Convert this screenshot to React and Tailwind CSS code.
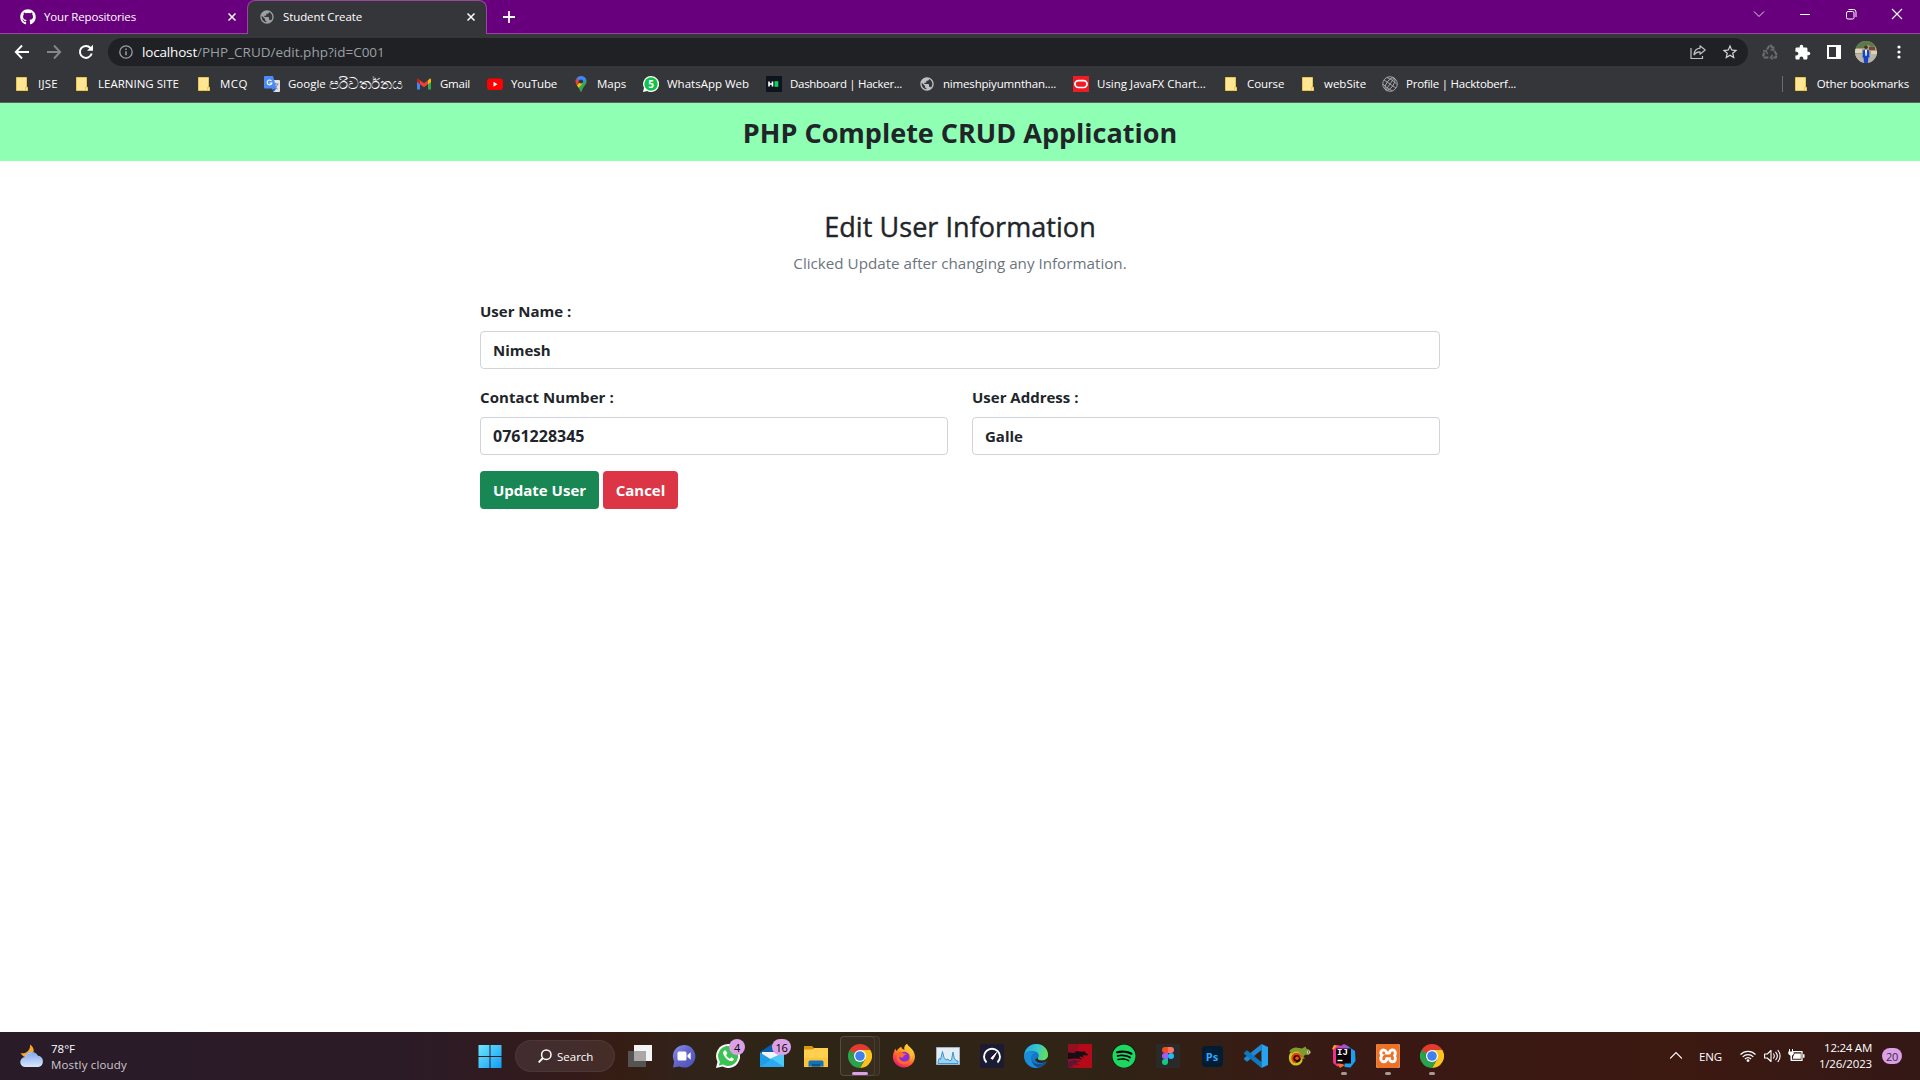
import React from "react";
import { FaGithub, FaSpotify } from "react-icons/fa6";
import { MdPublic, MdExtension, MdStarBorder } from "react-icons/md";
import { SiXampp } from "react-icons/si";

/* ---------- browser icons ---------- */

const CloseX = () => (
  <svg viewBox="0 0 8 8" className="h-2 w-2 shrink-0" stroke="#fff" strokeWidth="1.5">
    <path d="M.5.5l7 7M7.5.5l-7 7" />
  </svg>
);

const Folder = () => (
  <svg viewBox="0 0 16 16" className="h-4 w-4">
    <path d="M2.5 1.5h10v10.3l1 0v2.7h-11z" fill="#ffe694" stroke="#e9c54e" />
    <path d="M11.5 14.5v-3.2h2v3.2z" fill="#ffe694" stroke="#e9c54e" strokeWidth=".8" />
  </svg>
);

const Translate = () => (
  <svg viewBox="0 0 16 16" className="h-4 w-4">
    <path d="M6 4h9a1 1 0 011 1v10a1 1 0 01-1 1H9.5z" fill="#dfe1e5" />
    <path d="M8.5 8h6M11.500 7v1M13.500 8c-.5 2.500-2 4-3.500 5M10 9.500c.7 1.500 2 2.800 3.500 3.500" fill="none" stroke="#6f7f95" strokeWidth=".9" />
    <path d="M1 0h8l3.500 12.500H1a1 1 0 01-1-1V1a1 1 0 011-1z" fill="#4c8bf5" />
    <path d="M7.500 5A2.400 2.400 0 107.900 7H5.600" fill="none" stroke="#fff" strokeWidth="1.100" />
    <path d="M8.500 12.500H12.500L9.600 16z" fill="#2a56c6" />
  </svg>
);

const Gmail = () => (
  <svg viewBox="0 0 16 16" className="h-4 w-4">
    <path d="M1 4v9.500h3V7z" fill="#4285f4" />
    <path d="M15 4v9.500h-3V7z" fill="#34a853" />
    <path d="M12 4.200L14 2.600c.6 0 1 .6 1 1.400v2L12 8.200z" fill="#fbbc04" />
    <path d="M4 4.200L2 2.600C1.400 2.600 1 3.200 1 4v2l3 2.200z" fill="#c5221f" />
    <path d="M4 4.200l4 3 4-3v4l-4 3-4-3z" fill="#ea4335" />
  </svg>
);

const YouTube = () => (
  <svg viewBox="0 0 16 16" className="h-4 w-4">
    <rect x="0" y="2.500" width="16" height="11.500" rx="3" fill="#f00" />
    <path d="M6.500 5.800v4.900l4-2.450z" fill="#fff" />
  </svg>
);

const MapsPin = () => (
  <svg viewBox="0 0 16 16" className="h-4 w-4">
    <path d="M3.900 9.200L11.900 2C13 3 13.500 4.300 13.500 5.500c0 3.500-3.500 5-4.500 9-.3 1.700-1.700 1.700-2 0C6.400 12.300 5 10.800 3.900 9.200z" fill="#34a853" />
    <path d="M3.900 9.200C3 8 2.500 7 2.500 5.500c0-1.400.5-2.500 1.200-3.400L6 5.500z" fill="#ea4335" />
    <path d="M3.900 9.200L6.300 6.700 9.700 7.200 5.800 11.700z" fill="#fbbc04" />
    <path d="M3.700 2.100C4.700.8 6.200 0 8 0c3 0 5 2 5.400 4.300L9.700 7.200 6 5z" fill="#4285f4" />
    <circle cx="8" cy="5.500" r="2.100" fill="#35363a" />
  </svg>
);

const WhatsAppBadge = () => (
  <span className="relative flex h-4 w-4 items-center justify-center">
    <svg viewBox="0 0 16 16" className="absolute inset-0 h-4 w-4">
      <path d="M8 0a8 8 0 11-3.800 15L0 16l1-4.200A8 8 0 018 0z" fill="#fff" />
      <circle cx="8" cy="8" r="6.700" fill="#12c24a" />
    </svg>
    <span className="relative text-[10px] leading-none font-bold text-white">5</span>
  </span>
);

const HackerRank = () => (
  <svg viewBox="0 0 16 16" className="h-4 w-4">
    <path d="M0 0h16v16H0z" fill="#0e141e" />
    <path d="M3 5.500v5M6.500 5.500v5M3 8h3.500" stroke="#fff" strokeWidth="1.600" />
    <path d="M8.500 5.200h3.800v5.600H8.500z" fill="#05d75c" />
  </svg>
);

const Oracle = () => (
  <svg viewBox="0 0 16 16" className="h-4 w-4">
    <path d="M0 0h16v16H0z" fill="#ee1c24" />
    <rect x="2" y="4.700" width="12" height="6.800" rx="3.400" fill="none" stroke="#fff" strokeWidth="1.700" />
  </svg>
);

const Hacktoberfest = () => (
  <svg viewBox="0 0 16 16" className="h-4 w-4" fill="none" stroke="#a9abb0" strokeWidth=".9">
    <circle cx="8" cy="8" r="7.300" />
    <ellipse cx="8" cy="8" rx="3.300" ry="7.300" transform="rotate(35 8 8)" />
    <path d="M3.800 14L12.200 2M2 4l12 8M5 1.600C8 2.500 12 5 15 8.500M1 8c3 3.500 6 5.500 9.500 6.800" />
  </svg>
);

const Globe = () => <MdPublic className="h-4 w-4 shrink-0 text-[#bdc1c6]" />;

const bookmarks = [
  { icon: Folder, label: "IJSE", cls: "w-[60px] tracking-[0.25px]" },
  { icon: Folder, label: "LEARNING SITE", cls: "w-[122px]" },
  { icon: Folder, label: "MCQ", cls: "w-[68px] tracking-[0.4px]" },
  { icon: Translate, label: "Google ", sinhala: "පරිවර්තනය", cls: "w-[152px]" },
  { icon: Gmail, label: "Gmail", cls: "w-[71px] tracking-[-0.25px]" },
  { icon: YouTube, label: "YouTube", cls: "w-[86px] tracking-[-0.17px]" },
  { icon: MapsPin, label: "Maps", cls: "w-[70px]" },
  { icon: WhatsAppBadge, label: "WhatsApp Web", cls: "w-[123px]" },
  { icon: HackerRank, label: "Dashboard | Hacker...", cls: "w-[153px] tracking-[-0.3px]" },
  { icon: Globe, label: "nimeshpiyumnthan....", cls: "w-[154px] tracking-[-0.18px]" },
  { icon: Oracle, label: "Using JavaFX Chart...", cls: "w-[150px]" },
  { icon: Folder, label: "Course", cls: "w-[77px] tracking-[-0.1px]" },
  { icon: Folder, label: "webSite", cls: "w-[82px]" },
  { icon: Hacktoberfest, label: "Profile | Hacktoberf...", cls: "w-[135px] tracking-[-0.24px]" },
];

function Bookmark({ icon: Icon, label, sinhala, cls }) {
  return (
    <div className={`flex shrink-0 items-center whitespace-pre ${cls}`}>
      <span className="mr-2 flex h-4 w-4 shrink-0 items-center justify-center">
        <Icon />
      </span>
      <span>{label}</span>
      {sinhala && <span className="text-[14.500px] leading-none">{sinhala}</span>}
    </div>
  );
}

function TabStrip() {
  return (
    <div className="flex h-[34px] bg-[#68007e] text-[11.500px] text-white">
      <div className="flex w-[247px] items-center border-b border-[#97479f] pr-[11px] pl-5">
        <FaGithub className="h-4 w-4" />
        <span className="ml-2 grow tracking-[-0.15px]">Your Repositories</span>
        <CloseX />
      </div>
      <div className="flex w-[240px] items-center rounded-t-lg border border-b-0 border-[#97479f] bg-[#35363a] pr-[11px] pb-px pl-[11px]">
        <MdPublic className="h-4 w-4 text-[#9aa0a6]" />
        <span className="ml-2 grow tracking-[-0.1px]">Student Create</span>
        <CloseX />
      </div>
      <div className="flex grow items-center border-b border-[#97479f] pl-4">
        <svg viewBox="0 0 12 12" className="h-3 w-3" stroke="#fff" strokeWidth="1.800">
          <path d="M6 0v12M0 6h12" />
        </svg>
      </div>
      <div className="flex items-start border-b border-[#97479f] pr-[17px] pt-2">
        <svg viewBox="0 0 12 12" className="mr-[34px] h-3 w-3" fill="none" stroke="#e8d5ec" strokeWidth="1">
          <path d="M1 3.500l5 5 5-5" />
        </svg>
        <svg viewBox="0 0 12 12" className="mr-[34px] h-3 w-3" stroke="#fff" strokeWidth="1">
          <path d="M1 6.500h10" />
        </svg>
        <svg viewBox="0 0 12 12" className="mr-[34px] h-3 w-3" fill="none" stroke="#fff" strokeWidth="1">
          <rect x="1.500" y="3.500" width="7.500" height="7.500" rx="1.500" />
          <path d="M3.500 1.500h5a2.500 2.500 0 012.500 2.500v5" />
        </svg>
        <svg viewBox="0 0 12 12" className="h-3 w-3" stroke="#fff" strokeWidth="1.100">
          <path d="M1 1l10 10M11 1L1 11" />
        </svg>
      </div>
    </div>
  );
}

const Avatar = () => (
  <svg viewBox="0 0 22 22" className="h-[22px] w-[22px]">
    <defs>
      <clipPath id="avatar">
        <circle cx="11" cy="11" r="11" />
      </clipPath>
    </defs>
    <g clipPath="url(#avatar)">
      <path d="M0 0h22v22H0z" fill="#a79d84" />
      <path d="M0 0h22v5l-6 1-3-2-4 3-9 0z" fill="#5d7a48" />
      <path d="M0 8h7v4H0zM16 10h6v3h-6z" fill="#ddd3ba" />
      <path d="M0 13h22v9H0z" fill="#b9b5a8" />
      <path d="M14 6h6v3h-6z" fill="#7a4630" />
      <path d="M8 9.500l2.300-1h1.500l2.200 1 .5 7h-1.200l-.3 5.500H9l-.5-5.500H7.500z" fill="#1343c8" />
      <path d="M10 8.800h2l-.3 6h-1.300z" fill="#fff" />
      <circle cx="11" cy="6.300" r="1.800" fill="#4b2e23" />
    </g>
  </svg>
);

function Toolbar() {
  return (
    <div className="flex h-9 items-center pl-[14px]">
      <svg viewBox="0 0 16 16" className="h-4 w-4" fill="none" stroke="#fff" strokeWidth="1.900">
        <path d="M15 8H2M8 1.500L1.800 8 8 14.500" />
      </svg>
      <svg viewBox="0 0 16 16" className="ml-4 h-4 w-4" fill="none" stroke="#85868a" strokeWidth="1.900">
        <path d="M1 8h13M8 1.500L14.200 8 8 14.500" />
      </svg>
      <svg viewBox="0 0 16 16" className="ml-4 h-4 w-4" fill="none" stroke="#fff" strokeWidth="2">
        <path d="M13.700 9.500A6 6 0 1112.500 4" />
        <path d="M15 .8v6H9z" fill="#fff" stroke="none" />
      </svg>
      <div className="ml-[14px] flex h-7 w-[1640px] items-center rounded-full bg-[#202124] pr-[9px] pl-[11px]">
        <svg viewBox="0 0 14 14" className="h-[14px] w-[14px]" fill="none" stroke="#9aa0a6" strokeWidth="1.300">
          <circle cx="7" cy="7" r="6.200" />
          <path d="M7 6.200v4M7 3.500v1.500" strokeWidth="1.500" />
        </svg>
        <span className="ml-[9px] grow text-[13.500px] text-[#9aa0a6]">
          <span className="tracking-[-0.17px] text-white">localhost</span>/PHP_CRUD/edit.php?id=C001
        </span>
        <svg viewBox="0 0 16 16" className="mr-[15px] h-4 w-4" fill="none" stroke="#bdc1c6" strokeWidth="1.200">
          <path d="M1 4v10.500h11.500V12" />
          <path d="M10 1.800L15.200 6 10 10.200V7.800c-2.500 0-4.500.8-6 3C4.300 7 6.500 4.500 10 4.200z" strokeLinejoin="round" />
        </svg>
        <MdStarBorder className="h-[18px] w-[18px] text-[#d5d7da]" />
      </div>
      <svg viewBox="0 0 16 16" className="ml-[14px] h-4 w-4" fill="none" stroke="#6d6e72" strokeWidth="2">
        <path d="M5 5.500L7.500 1.500h1.500L11 5M12.500 7l2.300 4-1 2.500H10M6.500 13.500H2.300L1.200 11l2-3.500" strokeDasharray="4.500 .8" />
        <path d="M11.800 2.500v3.500H8.500M10.500 11L8.500 13.500l2 2M1 7l3.200-.3L5.500 10" strokeWidth="1.300" />
      </svg>
      <MdExtension className="ml-4 h-[17px] w-[17px] text-white" />
      <svg viewBox="0 0 14 14" className="ml-4 h-[14px] w-[14px]">
        <path d="M0 0h14v14H0zM2 2v10h7V2z" fill="#fff" fillRule="evenodd" />
      </svg>
      <span className="ml-[14px]">
        <Avatar />
      </span>
      <svg viewBox="0 0 4 14" className="ml-[20px] h-[14px] w-1" fill="#fff">
        <circle cx="2" cy="2" r="1.600" />
        <circle cx="2" cy="7" r="1.600" />
        <circle cx="2" cy="12" r="1.600" />
      </svg>
    </div>
  );
}

function BookmarksBar() {
  return (
    <div className="flex h-[33px] items-center border-b border-[#5f6064] pr-[11px] pb-1 pl-[14px] text-[11.500px] text-white">
      {bookmarks.map((b) => (
        <Bookmark key={b.label} {...b} />
      ))}
      <div className="ml-auto h-4 w-px bg-[#6a6b6f]" />
      <div className="ml-[10px] flex items-center gap-2">
        <Folder />
        <span className="tracking-[-0.150px]">Other bookmarks</span>
      </div>
    </div>
  );
}

/* ---------- page ---------- */

const inputCls =
  "block h-[38px] w-full rounded border border-[#ced4da] bg-white px-3 font-bold text-[#212529] outline-none";

function Field({ label, value, labelCls = "", valueCls = "text-[15px]" }) {
  return (
    <div className="flex-1">
      <label className={`mb-2 block h-6 text-[15px] leading-6 font-bold ${labelCls}`}>{label}</label>
      <input className={`${inputCls} ${valueCls}`} defaultValue={value} />
    </div>
  );
}

function Page() {
  return (
    <main className="grow bg-white text-[#212529]">
      <nav className="flex h-[58px] items-center justify-center bg-[#8effb3] pt-[2px] text-[27px] font-bold">
        PHP Complete CRUD Application
      </nav>
      <div className="mx-auto mt-12 w-[960px]">
        <div className="mb-6 text-center">
          <h3 className="mb-[7px] h-[35px] pt-px text-[27px] leading-[34px] font-medium tracking-[0.05px] [-webkit-text-stroke:0.4px_#212529]">
            Edit User Information
          </h3>
          <p className="text-[15.200px] leading-6 text-[#6c757d]">Clicked Update after changing any Information.</p>
        </div>
        <form className="flex flex-col gap-4">
          <Field label="User Name :" value="Nimesh" />
          <div className="flex gap-6">
            <Field label="Contact Number :" value="0761228345" labelCls="tracking-[0.08px]" valueCls="text-base" />
            <Field label="User Address :" value="Galle" />
          </div>
          <div className="flex gap-1 text-[15px] font-bold text-white">
            <button type="button" className="h-[38px] w-[119px] rounded bg-[#198754]">Update User</button>
            <button type="button" className="h-[38px] w-[75px] rounded bg-[#dc3545]">Cancel</button>
          </div>
        </form>
      </div>
    </main>
  );
}

/* ---------- taskbar ---------- */

const Weather = () => (
  <svg viewBox="0 0 24 24" className="h-6 w-6">
    <defs>
      <linearGradient id="cloud" x1="0" y1="0" x2="0" y2="1">
        <stop offset="0" stopColor="#7da7ee" />
        <stop offset="1" stopColor="#d9e7fb" />
      </linearGradient>
    </defs>
    <path d="M10 .5c4 2.500 5 7 2 10.500S3 14 .5 9C5 10.500 11 6.500 10 .5z" fill="#f7a72a" />
    <path d="M5.500 23a5 5 0 01-.5-10 7 7 0 0113-1.200A5.700 5.700 0 0118.500 23z" fill="url(#cloud)" />
    <path d="M5 13a7 7 0 017-4" stroke="#a9c8f8" fill="none" />
  </svg>
);

const Windows = () => (
  <svg viewBox="0 0 24 24" className="h-6 w-6">
    <defs>
      <linearGradient id="win" x1="0" y1="0" x2="1" y2="1">
        <stop offset="0" stopColor="#6ee7fd" />
        <stop offset="1" stopColor="#129bf5" />
      </linearGradient>
    </defs>
    <path d="M.5 1h11v11H.5zM12.500 1h11v11h-11zM.5 13h11v11H.5zM12.500 13h11v11h-11z" fill="url(#win)" />
  </svg>
);

const TaskView = () => (
  <svg viewBox="0 0 24 24" className="h-6 w-6">
    <path d="M6 1h18v16H6z" fill="#f4f4f4" />
    <path d="M0 7h18v16H0z" fill="#555452" />
    <path d="M6 7h12v10H6z" fill="#a9a8a6" />
  </svg>
);

const Chat = () => (
  <svg viewBox="0 0 24 24" className="h-6 w-6">
    <defs>
      <linearGradient id="chat" x1="0" y1="0" x2="1" y2="1">
        <stop offset="0" stopColor="#8b8ff0" />
        <stop offset=".5" stopColor="#6264c7" />
        <stop offset="1" stopColor="#4b50bd" />
      </linearGradient>
    </defs>
    <path d="M12 1a11.300 11.300 0 11-4.600 21.600L1 23.500l1.200-5.800A11.300 11.300 0 0112 1z" fill="url(#chat)" />
    <rect x="5.500" y="7.500" width="9" height="9" rx="1.500" fill="#fff" />
    <path d="M15.500 11l3.200-2.700v7.400L15.500 13z" fill="#fff" />
  </svg>
);

const WhatsApp = () => (
  <svg viewBox="0 0 24 24" className="h-6 w-6">
    <path d="M12 0a12 12 0 11-5.500 22.600L0 24l1.500-6.300A12 12 0 0112 0z" fill="#fff" />
    <path d="M12 2a10 10 0 11-5 18.600l-4.200 1.100 1.100-4A10 10 0 0112 2z" fill="#3cc153" />
    <path d="M8.300 6.500c-1.500 1-1.600 2.800-.3 5 1.700 3 4 5 6.800 5.600 1.600.3 3-.8 3.100-2.400l-2.500-1.500-1.500 1.500c-1.800-.7-3-2-3.800-3.600l1.300-1.500L10 6.500z" fill="#fff" />
  </svg>
);

const Mail = () => (
  <svg viewBox="0 0 24 24" className="h-6 w-6">
    <path d="M0 8L12 0l12 8v3H0z" fill="#0a5ea8" />
    <path d="M2 8h20v8H2z" fill="#f1f5f9" />
    <path d="M0 8.500l12 7.500 12-7.500V23H0z" fill="#1f9ce8" />
    <path d="M24 8.500V23L10 14.700z" fill="#4cc9f7" />
    <path d="M0 23l12-8 12 8z" fill="#2aaaf0" />
  </svg>
);

const Explorer = () => (
  <svg viewBox="0 0 24 24" className="h-6 w-6">
    <path d="M0 2h8l2.500 2.500H20V8H0z" fill="#d9960f" />
    <path d="M0 5.500h8.500L10.500 4H24v19H0z" fill="#ffd04f" />
    <path d="M0 14h24v9H0z" fill="#fcc436" />
    <path d="M4.500 22.500V18A1.500 1.500 0 016 16.500h12a1.500 1.500 0 011.500 1.500v4.500z" fill="#1272be" />
    <path d="M8 20h8v2.500H8z" fill="#0b5590" />
  </svg>
);

const Chrome = () => (
  <svg viewBox="0 0 24 24" className="h-6 w-6">
    <path d="M12 12L1.600 6a12 12 0 0120.800 0z" fill="#e33b2e" />
    <path d="M12 12V6h10.400A12 12 0 0112 24l5.200-9z" fill="#fcc31e" />
    <path d="M12 24A12 12 0 011.600 6l5.200 9 10.400 0z" fill="#2ba24c" />
    <path d="M1.600 6h12L7 15z" fill="#e33b2e" />
    <path d="M1.600 6l5.200 9L12 12z" fill="#2ba24c" />
    <circle cx="12" cy="12" r="6" fill="#fff" />
    <circle cx="12" cy="12" r="4.800" fill="#3f7fee" />
  </svg>
);

const Firefox = () => (
  <svg viewBox="0 0 24 24" className="h-6 w-6">
    <defs>
      <linearGradient id="ff" x1=".8" y1="0" x2=".2" y2="1">
        <stop offset="0" stopColor="#fff14a" />
        <stop offset=".4" stopColor="#ff9a24" />
        <stop offset=".75" stopColor="#ff3d4c" />
        <stop offset="1" stopColor="#d8178c" />
      </linearGradient>
    </defs>
    <path d="M15 0c1 2 4.500 4 6 6.500 3 5 2.500 10-1.500 14A11.200 11.200 0 013 19C.5 16 .3 11.500 2 8c.3-1.500.8-2.800 1.500-3.500.2 1.300.5 2 1 2.500C6 4.500 8 3.300 9.500 2.700 9 4.500 10.500 5 12.500 6c-1-2.500.5-5 2.500-6z" fill="url(#ff)" />
    <circle cx="12.300" cy="13" r="5.300" fill="#8a2be0" />
    <path d="M6 9c2-2 4-1 5 .3l3 .4c-.5 1.500-2.500 1.500-2.800 3.500-1 1-3.500.2-4.200-.7C7 15 9 17.500 12.500 17.500c4 0 6.500-3.500 5-8 2.500 3 1.500 8.500-2.500 10.300C9.500 22 4 18 4.500 12z" fill="#ff6a2b" />
    <path d="M17.500 9.500C16.500 7 14 6.500 13 4.500c-.5-2 .8-3.700 2-4.500.8 2.500 4 4.500 5.200 8 1 3.200 0 7-2.200 9 1-2.500.7-5-.5-7.500z" fill="#ffc22e" />
  </svg>
);

const Monitor = () => (
  <svg viewBox="0 0 24 24" className="h-6 w-6">
    <path d="M.5 3.500h23v17H.5z" fill="#e4edf4" stroke="#9fb4c4" />
    <path d="M2 18.500l1-4 1.500 1 2-8 1.500 6 2 2.500 2-1 1.500 2 2-1 1.500-8 1.200 6 1.800 2.500 2 .500v2.500H2z" fill="#9fd2f3" stroke="#2b8fd0" strokeWidth=".9" />
  </svg>
);

const Speed = () => (
  <svg viewBox="0 0 24 24" className="h-6 w-6">
    <path d="M0 0h24v24H0z" fill="#1b1c33" />
    <path d="M6.500 18.500a8 8 0 1111 0" fill="none" stroke="#fff" strokeWidth="1.900" />
    <path d="M11 14.300L16.500 8.500l-3.800 6.800z" fill="#fff" stroke="#fff" />
  </svg>
);

const Edge = () => (
  <svg viewBox="0 0 24 24" className="h-6 w-6">
    <defs>
      <linearGradient id="edgeTop" x1="0" y1=".3" x2="1" y2=".5">
        <stop offset="0" stopColor="#23a8e0" />
        <stop offset=".5" stopColor="#36c6d0" />
        <stop offset="1" stopColor="#67e04f" />
      </linearGradient>
    </defs>
    <circle cx="12" cy="12" r="12" fill="#1478c8" />
    <path d="M.3 10.500C1.500 4.500 6 0 12.300 0 19 0 24 5 24 10.500c0 4-3 6-6 6-3.500 0-5-1.500-3.800-3 1.500-2 .3-5.500-3.700-6.300C6 6.300 2 8 .3 10.500z" fill="url(#edgeTop)" />
    <path d="M11 8.500c-3 1-4.500 4-3.800 7.500.8 4 4 6.500 8 7.600-8 1.700-15.500-4.500-15.100-12.600C3 7.500 8 6.500 11 8.500z" fill="#1c8ed8" />
    <path d="M22.500 17.500a12 12 0 01-7.800 6.200c-3.700-1-6.500-4-6.700-7.700.8 2.500 4 4.500 7.500 4 2.700-.3 5-1.300 7-2.500z" fill="#124f94" />
    <path d="M14.200 13.500c-1.200 1.500.3 3 3.800 3 2.500 0 4.500-1 5.500-3l1.500 1-2.500 3c-5 2.500-10 1.500-11.500-2z" fill="#30251a" />
  </svg>
);

const Dragon = () => (
  <svg viewBox="0 0 24 24" className="h-6 w-6">
    <path d="M0 0h24v24H0z" fill="#b60a1a" />
    <path d="M0 0h11L6 24H0z" fill="#94101e" />
    <path d="M0 8.500l6 .5 2.500-1L6 7l6 .5 3 .3 1.500-.8.8 1.500 2.700 1.800-.5 1.200-3-.3-2 .3 1.500 2.500-3-1.500-2 .5 3.500 2.500c-4-.5-6-1-8.500-1L0 15z" fill="#160d16" />
    <path d="M0 18l7-2 6 1-5 2 4 2-7-.5L2 24H0z" fill="#5d1436" />
  </svg>
);

const Figma = () => (
  <svg viewBox="0 0 24 24" className="h-6 w-6">
    <path d="M0 0h24v24H0z" fill="#2a2a2a" />
    <path d="M12 3H9a3 3 0 000 6h3z" fill="#f24e1e" />
    <path d="M12 3h3a3 3 0 010 6h-3z" fill="#ff7262" />
    <path d="M12 9H9a3 3 0 000 6h3z" fill="#a259ff" />
    <circle cx="15" cy="12" r="3" fill="#1abcfe" />
    <path d="M12 15H9a3 3 0 103 3z" fill="#0acf83" />
  </svg>
);

const Photoshop = () => (
  <span className="flex h-[21px] w-[21px] items-center justify-center rounded bg-[#001d34] text-[11px] leading-none font-bold text-[#31a8ff]">
    Ps
  </span>
);

const VSCode = () => (
  <svg viewBox="0 0 24 24" className="h-6 w-6">
    <path d="M17.500 0v6L3 17.800l-2.700-2.300c-.4-.4-.4-1 0-1.400z" fill="#2089d2" />
    <path d="M17.500 24v-6L3 6.200.3 8.500c-.4.4-.4 1 0 1.400z" fill="#1077bd" />
    <path d="M17.500 0L24 3v18l-6.500 3z" fill="#25a3ee" />
  </svg>
);

const Chameleon = () => (
  <svg viewBox="0 0 24 24" className="h-6 w-6" fill="none">
    <path d="M3 12C3.500 6 9 2.500 14 4.500l3.500-2 1 2.300c2.500.2 4 1.700 4.500 4L20.500 11l-3.500-.3-1.500 2 1.500 2h-3l-2-4z" fill="#82992f" />
    <path d="M13 9.500C9.500 5.500 2.500 8 2.300 13.500 2.200 18 5.500 20.500 8.700 20c3-.4 4.800-2.800 4.300-5.500" stroke="#c9c51e" strokeWidth="3" strokeLinecap="round" />
    <path d="M3 8.500C5 5 10 4.500 13 7.500l2 3" stroke="#82992f" strokeWidth="4" />
    <circle cx="8.500" cy="14" r="4.600" fill="#2a0703" />
    <path d="M12.700 14.500a4.200 4.200 0 10-5 3.800" stroke="#ee3a12" strokeWidth="1.900" />
    <circle cx="9" cy="14.300" r="1.800" fill="#f4501a" />
    <circle cx="20.500" cy="8" r="1.500" fill="#e6e6d0" />
    <circle cx="20.700" cy="8" r=".7" fill="#222" />
  </svg>
);

const IntelliJ = () => (
  <span className="relative block h-6 w-6">
    <svg viewBox="0 0 24 24" className="absolute inset-0 h-6 w-6">
      <path d="M2 1l7 1-4 6-5-3z" fill="#f7a12c" />
      <path d="M1 6l5-5 6 3-6 19-5-4z" fill="#f0318a" />
      <path d="M14 1l9 6 .5 10-5 6.500-6-.5z" fill="#16a2f4" />
      <path d="M12 0l5 3-6 5-4-5z" fill="#a94fd6" />
      <path d="M4 18l9 3-5 3z" fill="#fb6b3b" />
      <path d="M4 4.500H19v15H4z" fill="#0c0508" />
      <path d="M5.500 16.500h5" stroke="#fff" strokeWidth="1.400" />
    </svg>
    <span className="absolute top-[5px] left-[5px] font-['Liberation_Mono'] text-[9px] leading-none font-bold text-white">IJ</span>
  </span>
);

const Xampp = () => (
  <span className="flex h-6 w-6 items-center justify-center rounded-[2px] bg-white">
    <SiXampp className="h-6 w-6 text-[#ed7227]" />
  </span>
);

const Badge = ({ children, wide }) => (
  <span
    className={`absolute -top-[5px] flex h-4 items-center justify-center rounded-full bg-[#dca0e6] text-[11px] leading-none tracking-[-0.4px] text-black ${
      wide ? "-right-[7px] w-[19px]" : "-right-[5px] w-4"
    }`}
  >
    {children}
  </span>
);

const Spotify = () => (
  <span className="flex rounded-full bg-black">
    <FaSpotify className="h-6 w-6 text-[#1ed760]" />
  </span>
);

const apps = [
  { id: "chat", icon: Chat },
  { id: "whatsapp", icon: WhatsApp, badge: "4" },
  { id: "mail", icon: Mail, badge: "16" },
  { id: "explorer", icon: Explorer },
  { id: "chrome", icon: Chrome, active: true },
  { id: "firefox", icon: Firefox },
  { id: "monitor", icon: Monitor },
  { id: "speed", icon: Speed },
  { id: "edge", icon: Edge },
  { id: "dragon", icon: Dragon },
  { id: "spotify", icon: Spotify },
  { id: "figma", icon: Figma },
  { id: "photoshop", icon: Photoshop },
  { id: "vscode", icon: VSCode },
  { id: "chameleon", icon: Chameleon },
  { id: "intellij", icon: IntelliJ, running: true },
  { id: "xampp", icon: Xampp, running: true },
  { id: "chrome-2", icon: Chrome, running: true },
];

function AppButton({ icon: Icon, badge, active, running }) {
  return (
    <div className="relative flex h-10 w-11 items-center justify-center">
      {active && (
        <>
          <span className="absolute inset-y-0 left-[2px] w-10 rounded border border-white/8 bg-white/4" />
          <span className="absolute inset-y-0 left-[2px] w-[35px] rounded border border-white/8" />
        </>
      )}
      <span className="relative flex">
        <Icon />
        {badge && <Badge wide={badge.length > 1}>{badge}</Badge>}
      </span>
      {active && <span className="absolute bottom-px left-[14px] h-[3px] w-4 rounded-full bg-[#dca0e6]" />}
      {running && <span className="absolute bottom-px left-[19px] h-[3px] w-[6px] rounded-full bg-[#a39a96]" />}
    </div>
  );
}

function Tray() {
  return (
    <div className="ml-auto flex items-center pr-[18px] text-[11.500px] text-white">
      <svg viewBox="0 0 12 12" className="mr-[17px] h-3 w-3" fill="none" stroke="#fff" strokeWidth="1.100">
        <path d="M0 8.500l6-6 6 6" />
      </svg>
      <span className="mr-[18px] pt-[2px] tracking-[-0.15px]">ENG</span>
      <svg viewBox="0 0 16 16" className="mr-2 h-4 w-4" fill="none" stroke="#fff" strokeWidth="1.200">
        <path d="M.5 6.500c4.200-4.300 10.800-4.300 15 0" />
        <path d="M2.700 8.800c3-3 7.600-3 10.600 0M4.900 11c1.800-1.700 4.400-1.700 6.200 0" />
        <circle cx="8" cy="12.600" r="1.400" fill="#fff" stroke="none" />
      </svg>
      <svg viewBox="0 0 17 16" className="mr-[7px] h-4 w-[17px]" fill="none" stroke="#fff" strokeWidth="1.100">
        <path d="M.6 6h2.700L7 2.500v11L3.300 10H.6z" strokeLinejoin="round" />
        <path d="M9.300 5.500c1.200 1.500 1.200 3.500 0 5M11.500 3.800c2.200 2.500 2.200 5.900 0 8.400M13.700 2c3.200 3.500 3.200 8.500 0 12" />
      </svg>
      <svg viewBox="0 0 17 16" className="mr-[13px] h-4 w-[17px]">
        <path d="M5 3.700h9v8.600H3.500V10" fill="none" stroke="#fff" strokeWidth="1.200" />
        <path d="M6.500 5.500h6.300v5.300H5V9z" fill="#fff" />
        <path d="M15 6.200h1.500v3.600H15z" fill="#fff" />
        <path d="M1.500 1v3M4.500 1v3" stroke="#fff" />
        <path d="M.3 3.500h5.400V6L4 7.700v2L2.500 13V7.700L.3 6z" fill="#fff" />
      </svg>
      <div className="mr-[10px] flex w-[54px] flex-col items-end leading-4">
        <span className="tracking-[-0.25px]">12:24 AM</span>
        <span className="tracking-[-0.150px]">1/26/2023</span>
      </div>
      <span className="flex h-4 w-5 items-center justify-center rounded-full bg-[#dca0e6] text-[11px] leading-none tracking-[-0.3px] text-[#3a2a3c]">
        20
      </span>
    </div>
  );
}

function Taskbar() {
  return (
    <footer className="flex h-12 shrink-0 items-center bg-[linear-gradient(90deg,#291b28_0px,#2b1b27_400px,#341b19_580px,#361d13_620px,#30231a_690px,#2f2516_760px,#2f2416_1080px,#361c14_1260px,#391813_1400px,#3c1911_1680px,#341816_1920px)]">
      <div className="flex w-[467px] items-center pl-5">
        <Weather />
        <div className="ml-[7px] pt-px text-[11.500px] leading-4 text-white">
          <div>78°F</div>
          <div className="tracking-[0.180px] text-[#cfc9cd]">Mostly cloudy</div>
        </div>
      </div>
      <div className="flex w-11 justify-center pl-px">
        <Windows />
      </div>
      <div className="ml-1 flex h-8 w-[100px] items-center gap-[5px] rounded-full border border-white/5 bg-white/8 pl-[22px] text-[11.500px] text-white">
        <svg viewBox="0 0 14 14" className="h-[14px] w-[14px]" fill="none" stroke="#fff" strokeWidth="1.500">
          <circle cx="8.300" cy="5.700" r="4.700" />
          <path d="M5 9L.6 13.400" strokeWidth="1.900" />
        </svg>
        <span className="pt-px">Search</span>
      </div>
      <div className="ml-[3px] flex w-11 justify-center">
        <TaskView />
      </div>
      <div className="flex">
        {apps.map((a) => (
          <AppButton key={a.id} {...a} />
        ))}
      </div>
      <Tray />
    </footer>
  );
}

export default function App() {
  return (
    <div className="flex h-[1080px] w-[1920px] flex-col overflow-hidden font-['Open_Sans',sans-serif]">
      <header className="h-[103px] shrink-0 bg-[#35363a]">
        <TabStrip />
        <Toolbar />
        <BookmarksBar />
      </header>
      <Page />
      <Taskbar />
    </div>
  );
}
